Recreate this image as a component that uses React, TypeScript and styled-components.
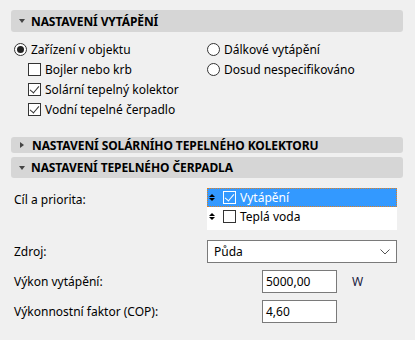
import styled, { createGlobalStyle } from "styled-components";

const GlobalStyle = createGlobalStyle`
  body {
    margin: 0;
    background: #f0f0f0;
    font-family: "Noto Sans", "Open Sans", sans-serif;
    font-size: 12px;
    color: #000;
  }
`;

function App() {
  return (
    <Panel>
      <GlobalStyle />
      <SectionHeader $top={10} $height={22}>
        <Caret $open />
        NASTAVENÍ VYTÁPĚNÍ
      </SectionHeader>

      <Options>
        <Column>
          <OptionRow>
            <Radio $checked />
            Zařízení v objektu
          </OptionRow>
          <OptionRow $indent>
            <Check />
            Bojler nebo krb
          </OptionRow>
          <OptionRow $indent>
            <Check $checked />
            Solární tepelný kolektor
          </OptionRow>
          <OptionRow $indent>
            <Check $checked />
            Vodní tepelné čerpadlo
          </OptionRow>
        </Column>
        <Column>
          <OptionRow>
            <Radio />
            Dálkové vytápění
          </OptionRow>
          <OptionRow>
            <Radio />
            Dosud nespecifikováno
          </OptionRow>
        </Column>
      </Options>

      <SectionHeader $top={18} $height={16}>
        <Caret />
        NASTAVENÍ SOLÁRNÍHO TEPELNÉHO KOLEKTORU
      </SectionHeader>
      <SectionHeader $top={4} $height={21}>
        <Caret $open />
        NASTAVENÍ TEPELNÉHO ČERPADLA
      </SectionHeader>

      <Form>
        <Label $tall>Cíl a priorita:</Label>
        <ListBox>
          <ListItem $selected>
            <Grip />
            <Check $checked $light />
            Vytápění
          </ListItem>
          <ListItem>
            <Grip />
            <Check />
            Teplá voda
          </ListItem>
        </ListBox>

        <Label>Zdroj:</Label>
        <Select>
          Půda
          <svg width="10" height="6" viewBox="0 0 10 6">
            <path d="M0.5 0.5 L5 5 L9.5 0.5" fill="none" stroke="#555" strokeWidth="1" />
          </svg>
        </Select>

        <Label>Výkon vytápění:</Label>
        <InputRow>
          <Field>5000,00</Field>
          <Unit>W</Unit>
        </InputRow>

        <Label>Výkonnostní faktor (COP):</Label>
        <InputRow>
          <Field>4,60</Field>
        </InputRow>
      </Form>
    </Panel>
  );
}

export default App;

const Panel = styled.div`
  width: 415px;
  height: 340px;
  padding: 0 12px 0 11px;
  box-sizing: border-box;
  overflow: hidden;
`;

const SectionHeader = styled.div<{ $top: number; $height: number }>`
  margin-top: ${p => p.$top}px;
  height: ${p => p.$height}px;
  background: #d6d6d6;
  border-radius: 3px;
  display: flex;
  align-items: center;
  padding-left: 8px;
  gap: 6px;
  font-weight: bold;
  font-size: 12px;
  letter-spacing: -0.1px;
  color: #000;
  white-space: nowrap;
`;

const Caret = styled.span<{ $open?: boolean }>`
  width: 0;
  height: 0;
  border-style: solid;
  ${p =>
    p.$open
      ? `border-width: 4px 3.5px 0 3.5px; border-color: #444 transparent transparent transparent;`
      : `border-width: 3.5px 0 3.5px 4px; border-color: transparent transparent transparent #444; margin: 0 2px 0 1px;`}
`;

const Options = styled.div`
  display: grid;
  grid-template-columns: 193px 1fr;
  padding: 7px 0 0 3px;
`;

const Column = styled.div`
  display: flex;
  flex-direction: column;
`;

const OptionRow = styled.div<{ $indent?: boolean }>`
  height: 20px;
  display: flex;
  align-items: center;
  gap: 4px;
  padding-left: ${p => (p.$indent ? 14 : 0)}px;
  white-space: nowrap;
`;

const Radio = styled.span<{ $checked?: boolean }>`
  width: 11px;
  height: 11px;
  border: 1px solid #333;
  border-radius: 50%;
  background: #fff;
  box-sizing: content-box;
  display: inline-flex;
  align-items: center;
  justify-content: center;
  &::after {
    content: "";
    width: 7px;
    height: 7px;
    border-radius: 50%;
    background: ${p => (p.$checked ? "#222" : "transparent")};
  }
`;

const Check = styled.span<{ $checked?: boolean; $light?: boolean }>`
  width: 11px;
  height: 11px;
  border: 1px solid ${p => (p.$light ? "#fff" : "#333")};
  background: ${p => (p.$light ? "transparent" : "#fff")};
  box-sizing: content-box;
  position: relative;
  &::after {
    content: "";
    display: ${p => (p.$checked ? "block" : "none")};
    position: absolute;
    left: 3px;
    top: 0px;
    width: 4px;
    height: 8px;
    border: solid ${p => (p.$light ? "#fff" : "#333")};
    border-width: 0 1.5px 1.5px 0;
    transform: rotate(40deg);
  }
`;

const Form = styled.div`
  display: grid;
  grid-template-columns: 193px 190px;
  grid-template-rows: 45px 23px 23px 23px;
  row-gap: 7px;
  padding: 10px 0 0 3px;
`;

const Label = styled.div<{ $tall?: boolean }>`
  display: flex;
  align-items: ${p => (p.$tall ? "flex-start" : "center")};
  padding-top: ${p => (p.$tall ? 3 : 0)}px;
  box-sizing: border-box;
  white-space: nowrap;
`;

const ListBox = styled.div`
  height: 42px;
  background: #fff;
  display: flex;
  flex-direction: column;
`;

const ListItem = styled.div<{ $selected?: boolean }>`
  height: 19px;
  display: flex;
  align-items: center;
  gap: 4px;
  box-sizing: border-box;
  padding-left: 1px;
  background: ${p => (p.$selected ? "#3399ff" : "transparent")};
  color: ${p => (p.$selected ? "#fff" : "#000")};
  border: 1px dotted ${p => (p.$selected ? "#e08020" : "transparent")};
`;

const Grip = styled.span`
  width: 6px;
  display: inline-flex;
  flex-direction: column;
  align-items: center;
  gap: 1px;
  margin-right: 4px;
  &::before,
  &::after {
    content: "";
    width: 0;
    height: 0;
    border-left: 3px solid transparent;
    border-right: 3px solid transparent;
  }
  &::before {
    border-bottom: 3px solid #000;
  }
  &::after {
    border-top: 3px solid #000;
  }
`;

const Select = styled.div`
  height: 23px;
  box-sizing: border-box;
  border: 1px solid #7a7a7a;
  background: #fff;
  display: flex;
  align-items: center;
  justify-content: space-between;
  padding: 0 6px 0 6px;
`;

const InputRow = styled.div`
  display: flex;
  align-items: center;
  padding-left: 55px;
  gap: 15px;
`;

const Field = styled.div`
  width: 75px;
  height: 23px;
  box-sizing: border-box;
  border: 1px solid #7a7a7a;
  background: #fff;
  display: flex;
  align-items: center;
  padding-left: 3px;
`;

const Unit = styled.span`
  color: #1a1a40;
`;
